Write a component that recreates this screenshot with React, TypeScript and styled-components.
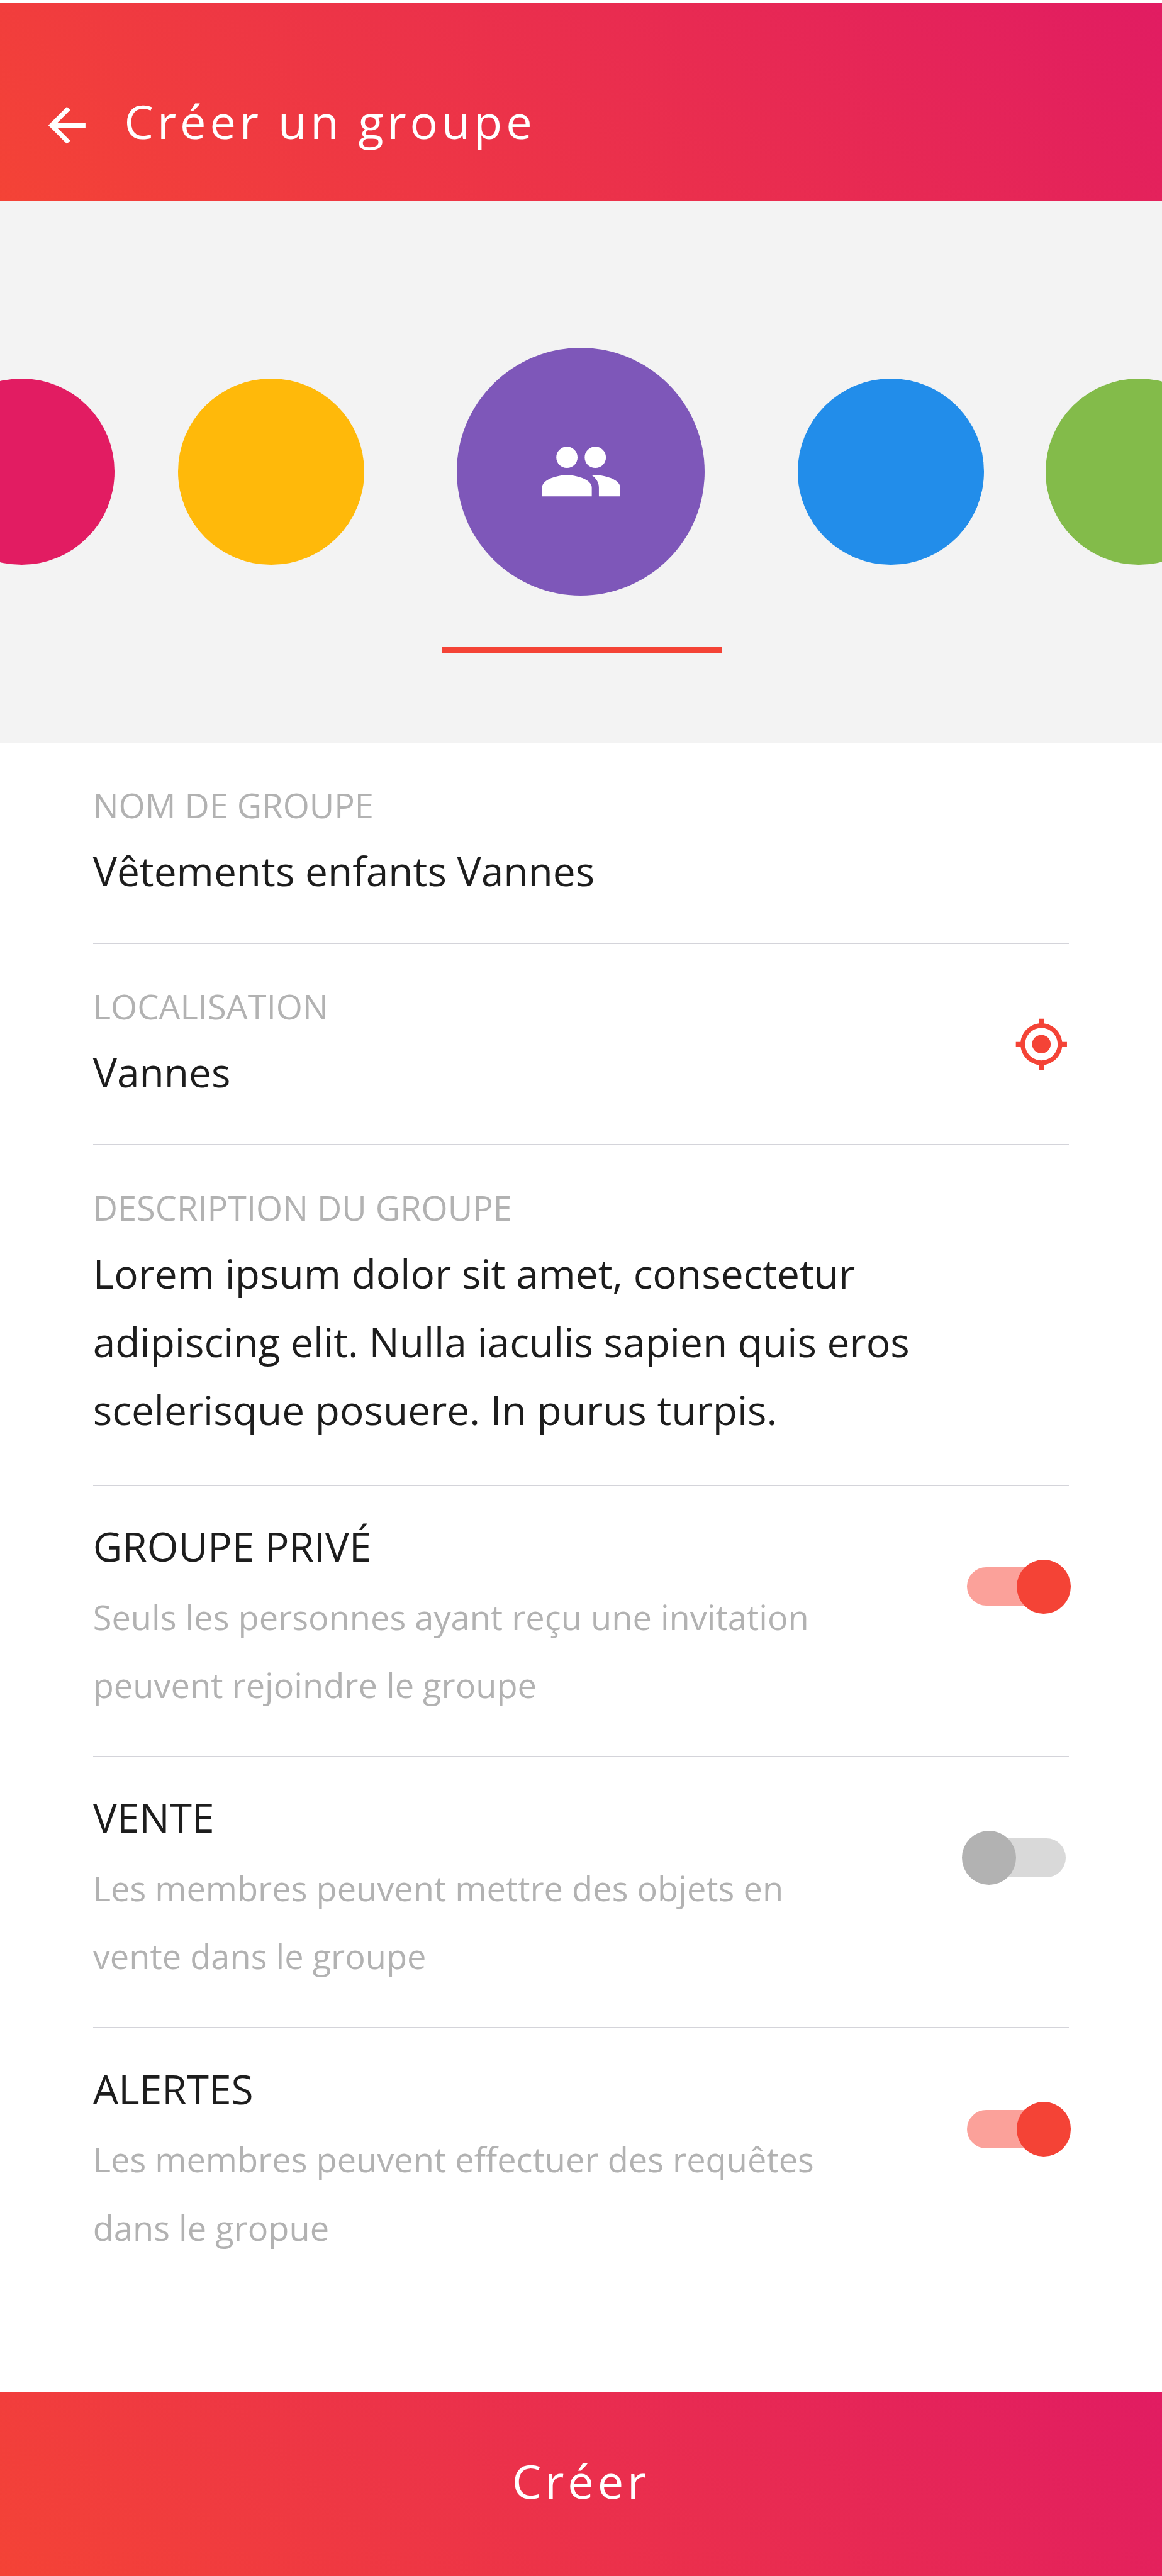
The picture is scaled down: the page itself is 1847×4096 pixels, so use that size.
import React from "react";
import styled, { createGlobalStyle } from "styled-components";

/* The layout is based on a 375 x 831.7 unit phone screen: 1rem = 1 unit. */
const GlobalStyle = createGlobalStyle`
  html { font-size: calc(100vh / 831.7); }
  body { margin: 0; background: #fff; }
  *, *::before, *::after { box-sizing: border-box; }
`;

const gradient = "linear-gradient(45deg, #f44336 0%, #e11c62 100%)";

const Screen = styled.div`
  display: flex;
  flex-direction: column;
  width: 100%;
  height: 100vh;
  padding-top: 0.75rem;
  overflow: hidden;
  background: #fff;
  color: #1d1d1d;
  font-family: "Open Sans", "Noto Sans", sans-serif;
`;

const Header = styled.header`
  display: flex;
  flex: none;
  align-items: flex-start;
  gap: 9.55rem;
  height: 64rem;
  padding: 27.44rem 12.55rem 0;
  background: ${gradient};
  color: #fff;
`;

const BackButton = styled.button`
  display: block;
  margin: 3.37rem 0 0;
  padding: 0;
  border: 0;
  background: none;
  color: inherit;
`;

const Icon = styled.svg<{ $size: number }>`
  display: block;
  flex: none;
  width: ${(p) => p.$size}rem;
  height: ${(p) => p.$size}rem;
  fill: currentColor;
`;

const Title = styled.h1`
  margin: 0;
  font-size: 15rem;
  font-weight: 400;
  line-height: 22rem;
  letter-spacing: 1.2rem;
`;

const Hero = styled.section`
  display: flex;
  flex: none;
  flex-direction: column;
  align-items: flex-start;
  height: 175rem;
  padding-top: 47.5rem;
  overflow: hidden;
  background: #f3f3f3;
`;

const Palette = styled.div`
  display: flex;
  align-items: center;
  gap: 20rem;
  margin-left: -22.95rem;
`;

const Swatch = styled.div<{ $color: string; $active?: boolean }>`
  display: flex;
  flex: none;
  align-items: center;
  justify-content: center;
  width: ${(p) => (p.$active ? 80 : 60)}rem;
  height: ${(p) => (p.$active ? 80 : 60)}rem;
  margin: 0 ${(p) => (p.$active ? 10 : 0)}rem;
  border-radius: 50%;
  background: ${(p) => p.$color};
  color: #fff;

  &:first-child {
    margin-right: 0.45rem;
  }
`;

const Indicator = styled.div`
  width: 90.35rem;
  height: 2.05rem;
  margin: 16.68rem 0 0 142.8rem;
  background: #f44336;
`;

const Form = styled.main`
  flex: none;
  height: 532.7rem;
  padding: 0 30rem;
`;

const Field = styled.div<{ $height: number; $last?: boolean }>`
  display: flex;
  justify-content: space-between;
  height: ${(p) => p.$height}rem;
  border-bottom: ${(p) => (p.$last ? "0" : "0.5rem solid #d4d4da")};
`;

const FieldText = styled.div`
  padding-top: 10.2rem;
`;

const Label = styled.div`
  margin-bottom: 0.35rem;
  color: #b2b2b2;
  font-size: 11rem;
  line-height: 20rem;
  white-space: nowrap;
`;

const Value = styled.div`
  font-size: 13rem;
  line-height: 22rem;
  white-space: nowrap;
`;

const LocateButton = styled.button`
  align-self: center;
  padding: 0;
  border: 0;
  background: none;
  color: #f44336;
`;

const OptionText = styled.div`
  padding-top: 8.6rem;
`;

const OptionTitle = styled.div`
  margin-bottom: 0.65rem;
  font-size: 13rem;
  line-height: 22rem;
`;

const OptionHint = styled.div`
  color: #b2b2b2;
  font-size: 11rem;
  line-height: 22rem;
  white-space: nowrap;
`;

const Track = styled.div<{ $on: boolean }>`
  display: flex;
  flex: none;
  align-items: center;
  justify-content: ${(p) => (p.$on ? "flex-end" : "flex-start")};
  width: 31.75rem;
  height: 12.5rem;
  margin: 26.25rem 1.15rem 0 0;
  border-radius: 6.25rem;
  background: ${(p) => (p.$on ? "#fba19a" : "#d9d9d9")};
`;

const Knob = styled.div<{ $on: boolean }>`
  flex: none;
  width: 17.5rem;
  height: 17.5rem;
  margin: 0 -1.65rem;
  border-radius: 50%;
  background: ${(p) => (p.$on ? "#f44336" : "#b2b2b2")};
`;

const SubmitButton = styled.button`
  display: flex;
  flex: 1;
  align-items: flex-start;
  justify-content: center;
  width: 100%;
  margin: 0;
  padding: 17.65rem 0 0;
  border: 0;
  background: ${gradient};
  color: #fff;
  font-family: inherit;
  font-size: 15rem;
  line-height: 22rem;
  letter-spacing: 1.2rem;
`;

const ArrowBack = () => (
  <Icon $size={18} viewBox="0 0 24 24">
    <path d="M20 11H7.83l5.59-5.59L12 4l-8 8 8 8 1.41-1.41L7.83 13H20v-2z" />
  </Icon>
);

const People = () => (
  <Icon $size={27.5} viewBox="0 0 24 24">
    <path d="M16 11c1.66 0 2.99-1.34 2.99-3S17.66 5 16 5c-1.66 0-3 1.34-3 3s1.34 3 3 3zm-8 0c1.66 0 2.99-1.34 2.99-3S9.66 5 8 5C6.34 5 5 6.34 5 8s1.34 3 3 3zm0 2c-2.33 0-7 1.17-7 3.5V19h14v-2.5c0-2.33-4.67-3.5-7-3.5zm8 0c-.29 0-.62.02-.97.05 1.16.84 1.97 1.97 1.97 3.45V19h6v-2.5c0-2.33-4.67-3.5-7-3.5z" />
  </Icon>
);

const MyLocation = () => (
  <Icon $size={18} viewBox="0 0 24 24">
    <path d="M12 8c-2.21 0-4 1.79-4 4s1.79 4 4 4 4-1.79 4-4-1.79-4-4-4zm8.94 3c-.46-4.17-3.77-7.48-7.94-7.94V1h-2v2.06C6.83 3.52 3.52 6.83 3.06 11H1v2h2.06c.46 4.17 3.77 7.48 7.94 7.94V23h2v-2.06c4.17-.46 7.48-3.77 7.94-7.94H23v-2h-2.06zM12 19c-3.87 0-7-3.13-7-7s3.13-7 7-7 7 3.13 7 7-3.13 7-7 7z" />
  </Icon>
);

const swatches = [
  { color: "#e21c62" },
  { color: "#ffb90a" },
  { color: "#7e57b9", active: true },
  { color: "#228dea" },
  { color: "#83bb4a" },
];

const description = [
  "Lorem ipsum dolor sit amet, consectetur",
  "adipiscing elit. Nulla iaculis sapien quis eros",
  "scelerisque posuere. In purus turpis.",
];

const options = [
  {
    title: "GROUPE PRIVÉ",
    hint: ["Seuls les personnes ayant reçu une invitation", "peuvent rejoindre le groupe"],
    on: true,
  },
  {
    title: "VENTE",
    hint: ["Les membres peuvent mettre des objets en", "vente dans le groupe"],
    on: false,
  },
  {
    title: "ALERTES",
    hint: ["Les membres peuvent effectuer des requêtes", "dans le gropue"],
    on: true,
  },
];

export default function App() {
  return (
    <>
      <GlobalStyle />
      <Screen>
        <Header>
          <BackButton aria-label="Retour">
            <ArrowBack />
          </BackButton>
          <Title>Créer un groupe</Title>
        </Header>
        <Hero>
          <Palette>
            {swatches.map((s) => (
              <Swatch key={s.color} $color={s.color} $active={s.active}>
                {s.active && <People />}
              </Swatch>
            ))}
          </Palette>
          <Indicator />
        </Hero>
        <Form>
          <Field $height={65}>
            <FieldText>
              <Label>NOM DE GROUPE</Label>
              <Value>Vêtements enfants Vannes</Value>
            </FieldText>
          </Field>
          <Field $height={65}>
            <FieldText>
              <Label>LOCALISATION</Label>
              <Value>Vannes</Value>
            </FieldText>
            <LocateButton aria-label="Me localiser">
              <MyLocation />
            </LocateButton>
          </Field>
          <Field $height={110}>
            <FieldText>
              <Label>DESCRIPTION DU GROUPE</Label>
              {description.map((line) => (
                <Value key={line}>{line}</Value>
              ))}
            </FieldText>
          </Field>
          {options.map((o, i) => (
            <Field key={o.title} $height={87.6} $last={i === options.length - 1}>
              <OptionText>
                <OptionTitle>{o.title}</OptionTitle>
                {o.hint.map((line) => (
                  <OptionHint key={line}>{line}</OptionHint>
                ))}
              </OptionText>
              <Track $on={o.on} role="switch" aria-checked={o.on}>
                <Knob $on={o.on} />
              </Track>
            </Field>
          ))}
        </Form>
        <SubmitButton>Créer</SubmitButton>
      </Screen>
    </>
  );
}
